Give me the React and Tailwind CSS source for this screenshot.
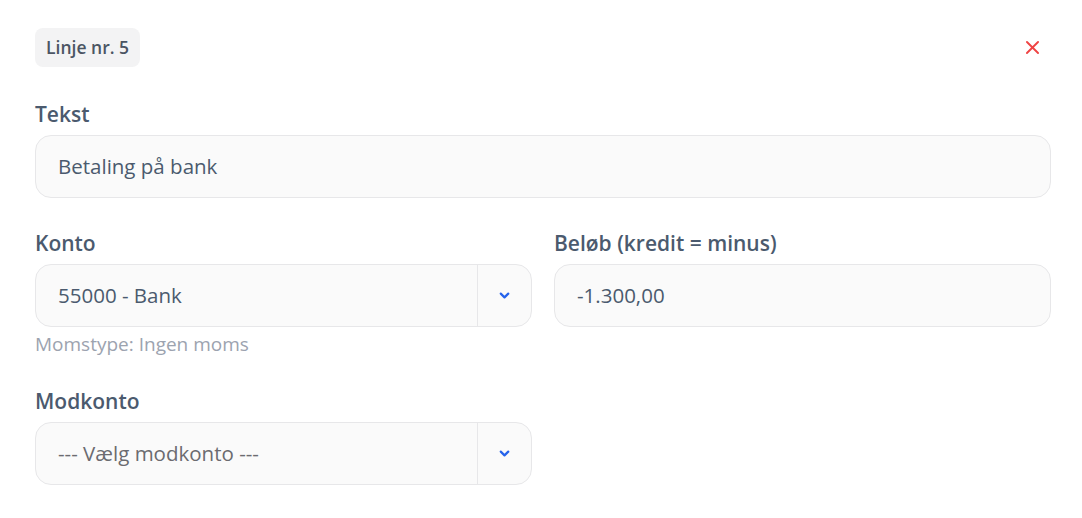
import React from 'react'

const ChevronDown = () => (
    <svg width="15" height="15" viewBox="0 0 24 24" fill="none" stroke="#2563eb" strokeWidth="3.5" strokeLinecap="round" strokeLinejoin="round">
        <path d="M6 9l6 6 6-6" />
    </svg>
)

const Label = ({ children }) => (
    <label className="block text-[21px] leading-[28px] font-semibold text-[#4b5a6e] mb-[7px]">{children}</label>
)

const Select = ({ value, placeholder }) => (
    <div className="flex h-[63px] rounded-[16px] border border-[#e7e7e9] bg-[#fafafa]">
        <div className={`flex-1 flex items-center pl-[22px] text-[20.5px] ${placeholder ? 'text-[#6b6b70]' : 'text-[#4b5a6e]'}`}>
            {value}
        </div>
        <div className="w-[54px] border-l border-[#e7e7e9] flex items-center justify-center">
            <ChevronDown />
        </div>
    </div>
)

export default function App() {
    return (
        <div className="bg-white min-h-[518px] pl-[35px] pr-[31px] pt-[28px]" style={{ fontFamily: '"Open Sans", sans-serif' }}>
            <div className="flex items-center justify-between">
                <span className="inline-flex items-center h-[39px] px-[11px] rounded-[8px] bg-[#f3f3f4] text-[17.5px] font-semibold text-[#4b5563]">
                    Linje nr. 5
                </span>
                <button className="mr-[9px] text-[#ef4444]">
                    <svg width="19" height="19" viewBox="0 0 24 24" fill="none" stroke="currentColor" strokeWidth="2.4" strokeLinecap="round">
                        <path d="M5 5l14 14M19 5L5 19" />
                    </svg>
                </button>
            </div>

            <div className="mt-[33px]">
                <Label>Tekst</Label>
                <div className="flex items-center h-[63px] rounded-[16px] border border-[#e7e7e9] bg-[#fafafa] px-[22px] text-[20.5px] text-[#4b5a6e]">
                    Betaling på bank
                </div>
            </div>

            <div className="grid grid-cols-2 gap-x-[22px] mt-[31px]">
                <div>
                    <Label>Konto</Label>
                    <Select value="55000 - Bank" />
                    <p className="mt-[3px] leading-[28px] text-[19px] text-[#9ca3af]">Momstype: Ingen moms</p>
                </div>
                <div>
                    <Label>Beløb (kredit = minus)</Label>
                    <div className="flex items-center h-[63px] rounded-[16px] border border-[#e7e7e9] bg-[#fafafa] px-[22px] text-[20.5px] text-[#4b5a6e]">
                        -1.300,00
                    </div>
                </div>
            </div>

            <div className="grid grid-cols-2 gap-x-[22px] mt-[29px]">
                <div>
                    <Label>Modkonto</Label>
                    <Select value="--- Vælg modkonto ---" placeholder />
                </div>
            </div>
        </div>
    )
}
